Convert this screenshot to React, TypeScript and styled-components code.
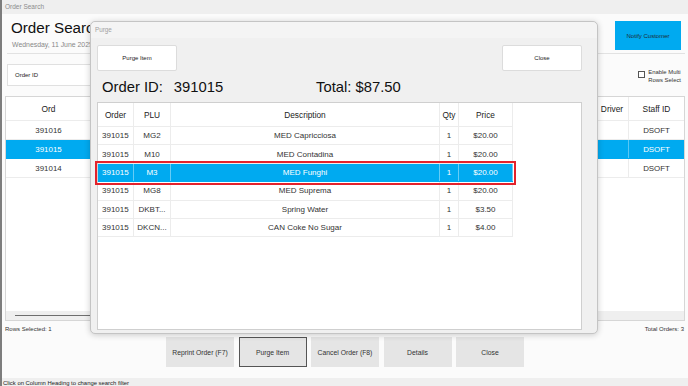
import React from 'react';
import styled, { createGlobalStyle } from 'styled-components';

const BLUE = '#00aaf0';

const GlobalStyle = createGlobalStyle`
  html, body {
    margin: 0;
    padding: 0;
    background: #fbfbfb;
  }
  body {
    font-family: 'Liberation Sans', Arial, sans-serif;
    color: #333;
  }
  * {
    box-sizing: border-box;
  }
`;

const Window = styled.div`
  position: relative;
  width: 688px;
  height: 386px;
  overflow: hidden;
  background: #fbfbfb;
  border-left: 2px solid #7d7d7d;
  display: flex;
  flex-direction: column;
`;

const TitleBar = styled.div`
  flex: none;
  height: 14px;
  line-height: 14px;
  padding-left: 3px;
  background: #efefef;
  color: #8c8c8c;
  font-size: 6.5px;
`;

const Header = styled.div`
  flex: none;
  height: 40px;
  margin: 0 3px 0 5px;
  display: flex;
  justify-content: space-between;
  align-items: flex-start;
  border-bottom: 1px solid #e2e2e2;
`;

// only the part left of the dialog is visible
const TitleBlock = styled.div`
  width: 83px;
  padding: 4px 0 0 4px;
  overflow: hidden;
  white-space: nowrap;
`;

const PageTitle = styled.div`
  font-size: 15.2px;
  line-height: 20px;
  color: #111;
`;

const DateText = styled.div`
  margin-top: 2px;
  padding-left: 1px;
  font-size: 6.9px;
  line-height: 9px;
  color: #888;
`;

const NotifyButton = styled.div`
  margin: 7px 4px 0 0;
  width: 66px;
  height: 29px;
  background: ${BLUE};
  display: flex;
  align-items: center;
  justify-content: center;
  font-size: 6px;
  color: #1d2a33;
`;

const FilterRow = styled.div`
  flex: none;
  height: 42px;
  padding: 10px 5px 0 5px;
  display: flex;
  align-items: flex-start;
`;

const FilterBox = styled.div`
  width: 83px;
  height: 22px;
  background: #fff;
  border: 1px solid #e0e0e0;
  border-right: none;
  padding-left: 7px;
  display: flex;
  align-items: center;
  font-size: 6px;
  color: #222;
`;

const FilterGap = styled.div`
  flex: 1;
`;

const CheckOption = styled.div`
  margin: 5px 2px 0 0;
  display: flex;
  align-items: flex-start;
  gap: 3px;
  font-size: 5.9px;
  line-height: 7.5px;
  color: #333;
`;

const CheckBox = styled.div`
  margin-top: 2px;
  width: 7px;
  height: 7px;
  border: 1px solid #555;
  background: #fff;
`;

const Grid = styled.div`
  flex: none;
  height: 225px;
  margin: 0 3px;
  background: #fff;
  border: 1px solid #d6d6d6;
  display: flex;
  flex-direction: column;
`;

const GridRow = styled.div<{ $head?: boolean; $selected?: boolean }>`
  display: grid;
  grid-template-columns: 86px 1fr 33px 55px;
  height: ${(p) => (p.$head ? 24 : 19)}px;
  background: ${(p) => (p.$selected ? BLUE : '#fff')};
  color: ${(p) => (p.$selected ? '#fff' : p.$head ? '#222' : '#333')};
  font-size: ${(p) => (p.$head ? 8.4 : 7.9)}px;
  border-bottom: 1px solid ${(p) => (p.$selected ? BLUE : '#ececec')};
`;

const GridCell = styled.div<{ $selected?: boolean }>`
  display: flex;
  align-items: center;
  justify-content: center;
  border-right: 1px solid ${(p) => (p.$selected ? 'rgba(255,255,255,0.35)' : '#ececec')};
  &:last-child {
    border-right: none;
  }
`;

const GridFill = styled.div`
  flex: 1;
`;

const ScrollTrack = styled.div`
  height: 9px;
  background: #efefef;
  display: flex;
  align-items: center;
  padding-left: 9px;
`;

const ScrollThumb = styled.div`
  width: 120px;
  height: 1px;
  background: #6e6e6e;
`;

const Summary = styled.div`
  flex: none;
  height: 16px;
  padding: 0 4px 0 3px;
  display: flex;
  justify-content: space-between;
  align-items: center;
  font-size: 6px;
  color: #333;
`;

const ButtonRow = styled.div`
  flex: none;
  height: 31px;
  display: flex;
  justify-content: center;
  gap: 4.5px;
`;

const ActionButton = styled.div<{ $active?: boolean }>`
  width: 68px;
  height: 30px;
  background: #e5e5e5;
  border: 1px solid ${(p) => (p.$active ? '#555' : '#e5e5e5')};
  display: flex;
  align-items: center;
  justify-content: center;
  font-size: 6.8px;
  color: #333;
`;

const Spacer = styled.div`
  flex: 1;
`;

const StatusBar = styled.div`
  flex: none;
  height: 8px;
  padding: 1px 0 0 1px;
  background: #efefef;
  font-size: 5.9px;
  line-height: 9px;
  color: #222;
  white-space: nowrap;
`;

const Dialog = styled.div`
  position: absolute;
  left: 88px;
  top: 21px;
  width: 508px;
  height: 313px;
  background: #f0f0f0;
  border: 1px solid #c4c4c4;
  border-radius: 5px;
  box-shadow: 0 1px 6px rgba(0, 0, 0, 0.2);
  display: flex;
  flex-direction: column;
`;

const DialogTitle = styled.div`
  flex: none;
  height: 16px;
  line-height: 16px;
  padding-left: 4px;
  background: #f4f4f4;
  border-radius: 5px 5px 0 0;
  font-size: 6.3px;
  color: #a0a0a0;
`;

const DialogToolbar = styled.div`
  flex: none;
  padding: 7px 15px 0 6px;
  display: flex;
  justify-content: space-between;
`;

const DialogButton = styled.div`
  width: 80px;
  height: 26px;
  background: #fff;
  border: 1px solid #dcdcdc;
  border-radius: 2px;
  display: flex;
  align-items: center;
  justify-content: center;
  font-size: 6px;
  color: #222;
`;

const InfoRow = styled.div`
  flex: none;
  height: 31px;
  padding: 1px 0 0 11px;
  display: flex;
  align-items: center;
  font-size: 14.8px;
  color: #111;
`;

const OrderInfo = styled.div`
  width: 214px;
  display: flex;
  gap: 11px;
`;

const Panel = styled.div`
  flex: 1;
  margin: 0 15px 3px 6px;
  background: #fff;
  border: 1px solid #cfcfcf;
`;

const ItemRow = styled.div<{ $head?: boolean; $selected?: boolean }>`
  position: relative;
  display: grid;
  grid-template-columns: 36px 37px 269px 19px 54px;
  width: 415px;
  height: ${(p) => (p.$head ? '24px' : '18.4px')};
  background: ${(p) => (p.$selected ? BLUE : '#fff')};
  color: ${(p) => (p.$selected ? '#fff' : p.$head ? '#222' : '#333')};
  font-size: ${(p) => (p.$head ? 8.3 : 8)}px;
  border-bottom: 1px solid ${(p) => (p.$selected ? BLUE : '#ececec')};
  outline: ${(p) => (p.$selected ? '2px solid #e3222b' : 'none')};
  outline-offset: 1px;
  z-index: ${(p) => (p.$selected ? 1 : 0)};
`;

const ItemCell = styled.div<{ $left?: boolean; $selected?: boolean }>`
  display: flex;
  align-items: center;
  justify-content: ${(p) => (p.$left ? 'flex-start' : 'center')};
  padding-left: ${(p) => (p.$left ? '4px' : '0')};
  white-space: nowrap;
  overflow: hidden;
  border-right: 1px solid ${(p) => (p.$selected ? 'rgba(255,255,255,0.4)' : '#ececec')};
`;

const items = [
  { order: '391015', plu: 'MG2', desc: 'MED Capricciosa', qty: '1', price: '$20.00' },
  { order: '391015', plu: 'M10', desc: 'MED Contadina', qty: '1', price: '$20.00' },
  { order: '391015', plu: 'M3', desc: 'MED Funghi', qty: '1', price: '$20.00', selected: true },
  { order: '391015', plu: 'MG8', desc: 'MED Suprema', qty: '1', price: '$20.00' },
  { order: '391015', plu: 'DKBT...', desc: 'Spring Water', qty: '1', price: '$3.50' },
  { order: '391015', plu: 'DKCN...', desc: 'CAN Coke No Sugar', qty: '1', price: '$4.00' },
];

const orders = [
  { id: '391016', staff: 'DSOFT' },
  { id: '391015', staff: 'DSOFT', selected: true },
  { id: '391014', staff: 'DSOFT' },
];

export default function App() {
  return (
    <>
      <GlobalStyle />
      <Window>
        <TitleBar>Order Search</TitleBar>
        <Header>
          <TitleBlock>
            <PageTitle>Order Search</PageTitle>
            <DateText>Wednesday, 11 June 2025</DateText>
          </TitleBlock>
          <NotifyButton>Notify Customer</NotifyButton>
        </Header>
        <FilterRow>
          <FilterBox>Order ID</FilterBox>
          <FilterGap />
          <CheckOption>
            <CheckBox />
            <div>
              Enable Multi
              <br />
              Rows Select
            </div>
          </CheckOption>
        </FilterRow>
        <Grid>
          <GridRow $head>
            <GridCell>Ord</GridCell>
            <GridCell />
            <GridCell>Driver</GridCell>
            <GridCell>Staff ID</GridCell>
          </GridRow>
          {orders.map((o) => (
            <GridRow key={o.id} $selected={o.selected}>
              <GridCell $selected={o.selected}>{o.id}</GridCell>
              <GridCell $selected={o.selected} />
              <GridCell $selected={o.selected} />
              <GridCell $selected={o.selected}>{o.staff}</GridCell>
            </GridRow>
          ))}
          <GridFill />
          <ScrollTrack>
            <ScrollThumb />
          </ScrollTrack>
        </Grid>
        <Summary>
          <span>Rows Selected: 1</span>
          <span>Total Orders: 3</span>
        </Summary>
        <ButtonRow>
          <ActionButton>Reprint Order (F7)</ActionButton>
          <ActionButton $active>Purge Item</ActionButton>
          <ActionButton>Cancel Order (F8)</ActionButton>
          <ActionButton>Details</ActionButton>
          <ActionButton>Close</ActionButton>
        </ButtonRow>
        <Spacer />
        <StatusBar>Click on Column Heading to change search filter</StatusBar>

        <Dialog>
          <DialogTitle>Purge</DialogTitle>
          <DialogToolbar>
            <DialogButton>Purge Item</DialogButton>
            <DialogButton>Close</DialogButton>
          </DialogToolbar>
          <InfoRow>
            <OrderInfo>
              <span>Order ID:</span>
              <span>391015</span>
            </OrderInfo>
            <span>Total: $87.50</span>
          </InfoRow>
          <Panel>
            <ItemRow $head>
              <ItemCell>Order</ItemCell>
              <ItemCell>PLU</ItemCell>
              <ItemCell>Description</ItemCell>
              <ItemCell>Qty</ItemCell>
              <ItemCell>Price</ItemCell>
            </ItemRow>
            {items.map((it, i) => (
              <ItemRow key={i} $selected={it.selected}>
                <ItemCell $left $selected={it.selected}>{it.order}</ItemCell>
                <ItemCell $selected={it.selected}>{it.plu}</ItemCell>
                <ItemCell $selected={it.selected}>{it.desc}</ItemCell>
                <ItemCell $selected={it.selected}>{it.qty}</ItemCell>
                <ItemCell $selected={it.selected}>{it.price}</ItemCell>
              </ItemRow>
            ))}
          </Panel>
        </Dialog>
      </Window>
    </>
  );
}
